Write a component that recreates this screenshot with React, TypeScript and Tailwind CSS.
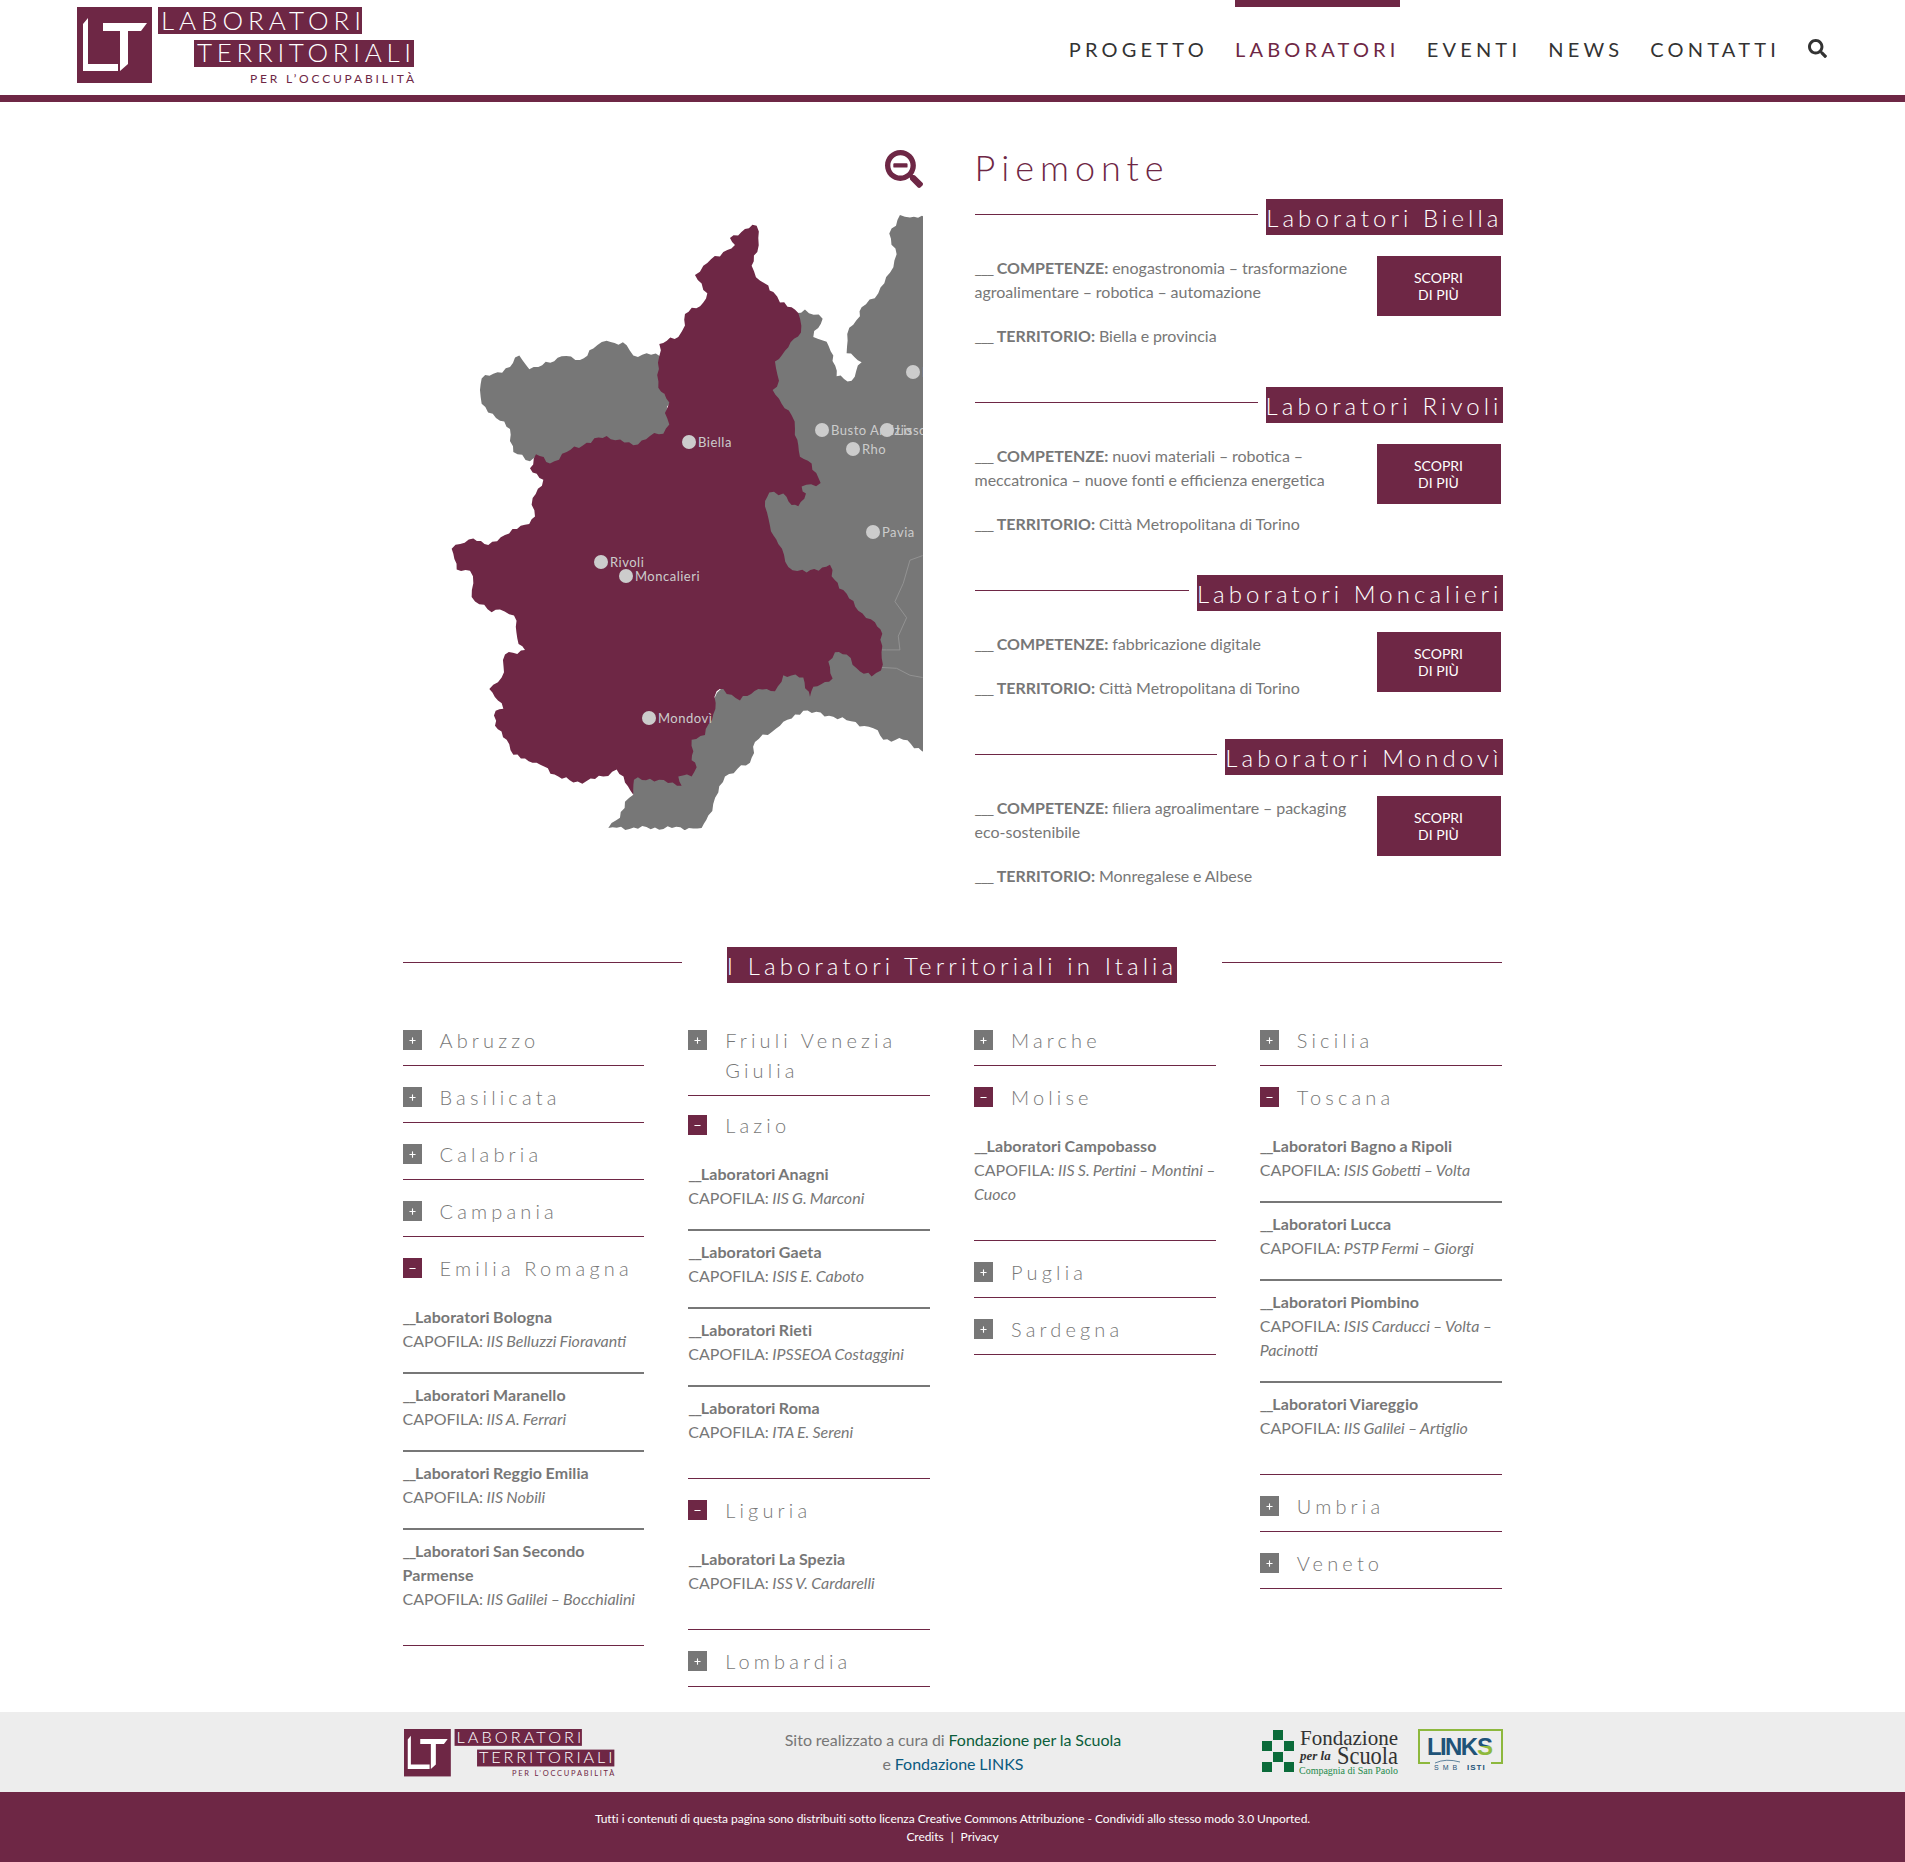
import { FaSearch, FaSearchMinus } from 'react-icons/fa';
import { Minus, Plus } from 'lucide-react';

const MAROON = '#6e2745';

const navItems = ['PROGETTO', 'LABORATORI', 'EVENTI', 'NEWS', 'CONTATTI'];

const labs = [
  {
    name: 'Laboratori Biella',
    skills: 'enogastronomia – trasformazione agroalimentare – robotica – automazione',
    area: 'Biella e provincia',
  },
  {
    name: 'Laboratori Rivoli',
    skills: 'nuovi materiali – robotica – meccatronica – nuove fonti e efficienza energetica',
    area: 'Città Metropolitana di Torino',
  },
  {
    name: 'Laboratori Moncalieri',
    skills: 'fabbricazione digitale',
    area: 'Città Metropolitana di Torino',
  },
  {
    name: 'Laboratori Mondovì',
    skills: 'filiera agroalimentare – packaging eco-sostenibile',
    area: 'Monregalese e Albese',
  },
];

type Entry = { name: string; lead: string };
type Region = { name: string; entries?: Entry[] };

const columns: Region[][] = [
  [
    { name: 'Abruzzo' },
    { name: 'Basilicata' },
    { name: 'Calabria' },
    { name: 'Campania' },
    {
      name: 'Emilia Romagna',
      entries: [
        { name: 'Bologna', lead: 'IIS Belluzzi Fioravanti' },
        { name: 'Maranello', lead: 'IIS A. Ferrari' },
        { name: 'Reggio Emilia', lead: 'IIS Nobili' },
        { name: 'San Secondo Parmense', lead: 'IIS Galilei – Bocchialini' },
      ],
    },
  ],
  [
    { name: 'Friuli Venezia Giulia' },
    {
      name: 'Lazio',
      entries: [
        { name: 'Anagni', lead: 'IIS G. Marconi' },
        { name: 'Gaeta', lead: 'ISIS E. Caboto' },
        { name: 'Rieti', lead: 'IPSSEOA Costaggini' },
        { name: 'Roma', lead: 'ITA E. Sereni' },
      ],
    },
    { name: 'Liguria', entries: [{ name: 'La Spezia', lead: 'ISS V. Cardarelli' }] },
    { name: 'Lombardia' },
  ],
  [
    { name: 'Marche' },
    { name: 'Molise', entries: [{ name: 'Campobasso', lead: 'IIS S. Pertini – Montini – Cuoco' }] },
    { name: 'Puglia' },
    { name: 'Sardegna' },
  ],
  [
    { name: 'Sicilia' },
    {
      name: 'Toscana',
      entries: [
        { name: 'Bagno a Ripoli', lead: 'ISIS Gobetti – Volta' },
        { name: 'Lucca', lead: 'PSTP Fermi – Giorgi' },
        { name: 'Piombino', lead: 'ISIS Carducci – Volta – Pacinotti' },
        { name: 'Viareggio', lead: 'IIS Galilei – Artiglio' },
      ],
    },
    { name: 'Umbria' },
    { name: 'Veneto' },
  ],
];

const pins = [
  { x: 259, y: 312, label: 'Biella' },
  { x: 171, y: 432, label: 'Rivoli' },
  { x: 196, y: 446, label: 'Moncalieri' },
  { x: 219, y: 588, label: 'Mondovì' },
  { x: 392, y: 300, label: 'Busto Arsizio' },
  { x: 457, y: 300, label: 'Lissone' },
  { x: 423, y: 319, label: 'Rho' },
  { x: 443, y: 402, label: 'Pavia' },
  { x: 483, y: 242, label: 'Bergamo' },
];

const piedmont =
  '980,208 985,235 982,265 965,295 978,320 1015,338 1030,352 1050,375 1085,385 1105,398 1113,440 1075,472 1035,503 1047,545 1028,565 1055,595 1085,620 1095,650 1105,685 1110,710 1145,725 1172,767 1115,775 1128,790 1105,818 1085,815 1060,790 1018,788 1005,818 1020,860 1045,900 1075,950 1130,962 1200,945 1205,970 1240,1000 1285,1045 1335,1070 1357,1095 1353,1175 1325,1188 1280,1170 1250,1140 1215,1135 1195,1155 1208,1192 1150,1210 1140,1232 1120,1190 1060,1185 1035,1220 985,1215 930,1240 880,1215 860,1220 850,1270 825,1315 785,1325 790,1350 785,1370 800,1385 785,1405 745,1405 755,1425 660,1410 612,1412 610,1445 585,1418 560,1390 520,1405 470,1415 430,1418 385,1405 320,1375 250,1358 230,1325 195,1295 197,1262 220,1258 178,1215 215,1190 225,1140 285,1130 262,1105 252,1055 210,1042 185,1048 125,1015 130,985 120,958 80,955 65,910 130,888 175,902 225,880 285,858 315,840 308,800 340,760 300,735 318,705 360,725 410,700 470,680 530,665 610,685 660,665 700,660 718,640 705,615 718,592 685,560 688,465 745,450 765,425 765,400 820,375 832,355 795,315 820,295 880,265 915,250 900,235 945,215';

const aosta =
  '155,540 190,530 240,515 268,490 298,520 325,515 395,492 450,500 490,475 530,458 590,468 610,490 650,485 690,492 690,560 722,592 710,615 722,640 705,665 610,690 530,670 470,685 410,705 360,730 318,710 300,720 250,700 240,650 210,632 155,595 150,565';

const lombardy =
  '1500,185 1440,190 1410,185 1378,225 1400,270 1380,310 1345,355 1295,385 1290,405 1258,430 1250,485 1295,505 1265,545 1220,535 1210,490 1190,460 1150,450 1178,410 1125,390 1100,398 1030,500 1020,565 1000,820 1050,960 1150,1050 1100,1130 1060,1170 880,1205 790,1300 770,1400 612,1400 610,1445 585,1460 570,1495 535,1517 815,1517 835,1490 865,1440 885,1405 960,1375 975,1330 1050,1295 1120,1262 1210,1275 1330,1300 1360,1325 1420,1325 1500,1358';

// the traced outlines are coarse, this adds the small jags of a real border
function roughen(points: string) {
  const pts = points.split(' ').map((p) => p.split(',').map(Number));
  const out: string[] = [];
  let step = 0;
  pts.forEach(([x, y], i) => {
    const [nx, ny] = pts[(i + 1) % pts.length];
    const len = Math.hypot(nx - x, ny - y);
    const parts = Math.max(1, Math.round(len / 13));
    for (let k = 0; k < parts; k++) {
      const t = k / parts;
      const jag = k === 0 ? 0 : Math.sin(step * 2.3) * 3 + Math.sin(step * 0.9) * 2.5;
      out.push(`${x + (nx - x) * t + ((ny - y) / len) * jag},${y + (ny - y) * t - ((nx - x) / len) * jag}`);
      step++;
    }
  });
  return out.join(' ');
}

function Logo({ width }: { width: number }) {
  return (
    <svg width={width} height={(width * 78) / 338} viewBox="0 0 338 78" className="block shrink-0">
      <rect x="0" y="0" width="75" height="76" fill={MAROON} />
      <path d="M6 17 L11 11 L11 57 L41 57 L41 64 L6 64 Z" fill="#fff" />
      <path d="M26 16 L70 16 L64 24 L51 24 L51 57 L43 64 L43 24 L26 24 Z" fill="#fff" />
      <rect x="81" y="0" width="204" height="27" fill={MAROON} />
      <rect x="117" y="33" width="220" height="27" fill={MAROON} />
      <text x="84" y="23" fill="#fff" fontFamily="Lato" fontWeight="300" fontSize="26" textLength="200">
        LABORATORI
      </text>
      <text x="120" y="55" fill="#fff" fontFamily="Lato" fontWeight="300" fontSize="26" textLength="214">
        TERRITORIALI
      </text>
      <text x="173" y="76" fill={MAROON} fontFamily="Lato" fontSize="12" textLength="164">
        PER L’OCCUPABILITÀ
      </text>
    </svg>
  );
}

function Piedmont() {
  return (
    <svg width="493" height="615" viewBox="0 85 493 615" className="block">
      <g transform="scale(0.3333 0.4601)">
        <polygon points={roughen(lombardy)} fill="#777" />
        <polygon points={roughen(aosta)} fill="#777" />
        <polyline
          points="1478,925 1440,935 1420,985 1395,1025 1430,1060 1405,1100 1410,1130 1370,1130 1355,1130"
          fill="none"
          stroke="#999"
          strokeWidth="2"
        />
        <polyline points="1353,1168 1400,1170 1440,1185 1478,1190" fill="none" stroke="#999" strokeWidth="2" />
        <polygon points={roughen(piedmont)} fill={MAROON} />
      </g>
      {pins.map((pin) => (
        <g key={pin.label}>
          <circle cx={pin.x} cy={pin.y} r="7" fill="#ccc" />
          <text x={pin.x + 9} y={pin.y + 4.5} fill="#ccc" fontFamily="Lato" fontSize="13" letterSpacing="0.5">
            {pin.label}
          </text>
        </g>
      ))}
    </svg>
  );
}

function Blank({ count }: { count: number }) {
  return <span className="tracking-[-1.2px]">{'_'.repeat(count)}</span>;
}

function LabBlock({ name, skills, area }: { name: string; skills: string; area: string }) {
  return (
    <div className="mb-[39px]">
      <div className="flex items-start gap-2">
        <div className="mt-[15px] h-px flex-1 bg-[#6e2745]" />
        <h3 className="h-9 bg-[#6e2745] text-[24px] leading-[38px] font-light tracking-[4.08px] whitespace-nowrap text-white">
          {name}
        </h3>
      </div>
      <div className="mt-[21px] flex items-start justify-between pr-[2px]">
        <div className="w-[386px] text-base leading-6 [word-spacing:-0.3px] text-[#777]">
          <p>
            <Blank count={3} /> <strong>COMPETENZE:</strong> {skills}
          </p>
          <p className="mt-5">
            <Blank count={3} /> <strong>TERRITORIO:</strong> {area}
          </p>
        </div>
        <a className="flex h-[60px] w-[124px] items-center justify-center bg-[#6e2745] text-center text-sm leading-[17px] text-white">
          SCOPRI
          <br />
          DI PIÙ
        </a>
      </div>
    </div>
  );
}

function RegionItem({ region, first }: { region: Region; first: boolean }) {
  const open = Boolean(region.entries);
  // the two-line Friuli heading sits a little closer to the next region
  const twoLines = first && region.name.length > 16;
  return (
    <div className={`border-b border-[#6e2745] pb-[10px] ${twoLines ? 'mb-[14px]' : 'mb-4'}`}>
      <div className="flex items-start gap-[18px]">
        <span
          className={`mt-[5px] flex h-5 w-[19px] shrink-0 items-center justify-center text-white ${
            open ? 'bg-[#6e2745]' : 'bg-[#777]'
          }`}
        >
          {open ? <Minus size={9} strokeWidth={3} /> : <Plus size={9} strokeWidth={3} />}
        </span>
        <h4 className="text-[20px] leading-[30px] font-light tracking-[4.15px] text-[#777]">{region.name}</h4>
      </div>
      {region.entries && (
        <div className="mt-[22px] mb-6">
          {region.entries.map((entry, i) => (
            <div
              key={entry.name}
              className={`text-base leading-6 [word-spacing:-0.6px] text-[#777] ${
                i > 0 ? 'mt-[19px] border-t-2 border-[#777] pt-[9px]' : ''
              }`}
            >
              <strong className="block tracking-[0.1px]">
                <Blank count={2} />
                Laboratori {entry.name}
              </strong>
              CAPOFILA: <em>{entry.lead}</em>
            </div>
          ))}
        </div>
      )}
    </div>
  );
}

function PartnerLogos() {
  return (
    <div className="flex items-start gap-[19px]">
      <svg width="137" height="46" viewBox="0 0 137 46" className="mt-[1px] block">
        {[
          [11, 0],
          [0, 11],
          [22, 11],
          [11, 22],
          [0, 32],
          [22, 32],
        ].map(([x, y]) => (
          <rect key={`${x}-${y}`} x={x} y={y} width="10" height="10" fill="#0b6b3a" />
        ))}
        <text x="38" y="15" fontFamily="Liberation Serif" fontSize="21" fill="#333" textLength="98" lengthAdjust="spacingAndGlyphs">
          Fondazione
        </text>
        <text x="38" y="30" fontFamily="Liberation Serif" fontSize="13" fontStyle="italic" fontWeight="700" fill="#333">
          per la
        </text>
        <text x="75" y="34" fontFamily="Liberation Serif" fontSize="25" fill="#333" textLength="61" lengthAdjust="spacingAndGlyphs">
          Scuola
        </text>
        <text x="37" y="44" fontFamily="Liberation Serif" fontSize="11" fill="#1f8a4c" textLength="99" lengthAdjust="spacingAndGlyphs">
          Compagnia di San Paolo
        </text>
      </svg>
      <svg width="85" height="46" viewBox="0 0 85 46" className="block">
        <defs>
          <linearGradient id="links-s" x1="0" y1="0" x2="0" y2="1">
            <stop offset="0.5" stopColor="#1f5378" />
            <stop offset="0.5" stopColor="#8db83d" />
          </linearGradient>
        </defs>
        <path d="M12 34 L1 34 L1 1 L84 1 L84 34 L73 34" fill="none" stroke="#8db83d" strokeWidth="2" />
        <text x="9" y="26" fontFamily="Liberation Sans" fontWeight="700" fontSize="24" fill="#1f5378" textLength="51">
          LINK
        </text>
        <text x="59" y="26" fontFamily="Liberation Sans" fontWeight="700" fontSize="24" fill="url(#links-s)">
          S
        </text>
        <path d="M17 34 Q28 29 42 33" fill="none" stroke="#1f5378" strokeWidth="0.7" />
        <text x="16" y="41" fontFamily="Liberation Sans" fontSize="7" fill="#1f5378" letterSpacing="4">
          SMB
        </text>
        <text x="49" y="41" fontFamily="Liberation Sans" fontWeight="700" fontSize="8" fill="#1f5378" letterSpacing="1">
          ISTI
        </text>
      </svg>
    </div>
  );
}

export default function App() {
  return (
    <div className="w-full bg-white font-['Lato',sans-serif]">
      <header className="flex h-[102px] items-start justify-between border-b-[7px] border-[#6e2745] pr-[78px] pl-[77px]">
        <div className="pt-[7px]">
          <Logo width={338} />
        </div>
        <nav className="flex h-[95px] items-center">
          {navItems.map((item) => (
            <a
              key={item}
              className={`flex h-full items-center border-t-[7px] pb-[4px] text-[20px] tracking-[4.2px] ${
                item === 'LABORATORI' ? 'border-[#6e2745] text-[#6e2745]' : 'border-transparent text-[#333]'
              } ${item === 'CONTATTI' ? 'mr-[28px]' : 'mr-[27px]'}`}
            >
              {item}
            </a>
          ))}
          <FaSearch size={19} className="mt-[1px] text-[#333]" />
        </nav>
      </header>

      <main className="mx-auto w-[1100px]">
        <section className="flex items-start pt-[48px]">
          <div className="flex w-[521px] flex-col items-end">
            <FaSearchMinus size={38} className="mr-[1px] text-[#6e2745]" />
            <div className="mt-[27px] mr-[1px]">
              <Piedmont />
            </div>
          </div>
          <div className="ml-[51px] flex-1">
            <h2 className="mb-[5px] h-[44px] text-[36px] leading-[34px] font-light tracking-[6px] text-[#6e2745]">
              Piemonte
            </h2>
            {labs.map((lab) => (
              <LabBlock key={lab.name} {...lab} />
            ))}
          </div>
        </section>

        <section className="mt-[20px]">
          <div className="flex items-start justify-between">
            <div className="mt-[15px] h-px w-[279px] bg-[#6e2745]" />
            <h2 className="h-9 bg-[#6e2745] text-[24px] leading-[38px] font-light tracking-[4.1px] whitespace-nowrap text-white">
              I Laboratori Territoriali in Italia
            </h2>
            <div className="mt-[15px] h-px w-[280px] bg-[#6e2745]" />
          </div>
          <div className="mt-[42px] grid grid-cols-4 gap-x-[44px] pr-[1px]">
            {columns.map((regions) => (
              <div key={regions[0].name}>
                {regions.map((region, i) => (
                  <RegionItem key={region.name} region={region} first={i === 0} />
                ))}
              </div>
            ))}
          </div>
        </section>
      </main>

      <footer className="mt-[9px]">
        <div className="h-20 bg-[#ededed]">
          <div className="mx-auto flex h-full w-[1100px] items-start pt-[17px]">
            <div className="flex-1 pl-[1px]">
              <Logo width={211} />
            </div>
            <p className="mt-[-1px] text-center text-base leading-6 [word-spacing:-0.3px] text-[#777]">
              Sito realizzato a cura di <a className="text-[#0b5d3b]">Fondazione per la Scuola</a>
              <br />e <a className="text-[#0b5a80]">Fondazione LINKS</a>
            </p>
            <div className="flex flex-1 justify-end">
              <PartnerLogos />
            </div>
          </div>
        </div>
        <div className="h-[70px] bg-[#6e2745] pt-[18px] text-center text-xs leading-[18px] tracking-[-0.04px] text-white">
          <p>
            Tutti i contenuti di questa pagina sono distribuiti sotto licenza Creative Commons Attribuzione - Condividi
            allo stesso modo 3.0 Unported.
          </p>
          <p>
            Credits<span className="mx-[7px]">|</span>Privacy
          </p>
        </div>
      </footer>
    </div>
  );
}
